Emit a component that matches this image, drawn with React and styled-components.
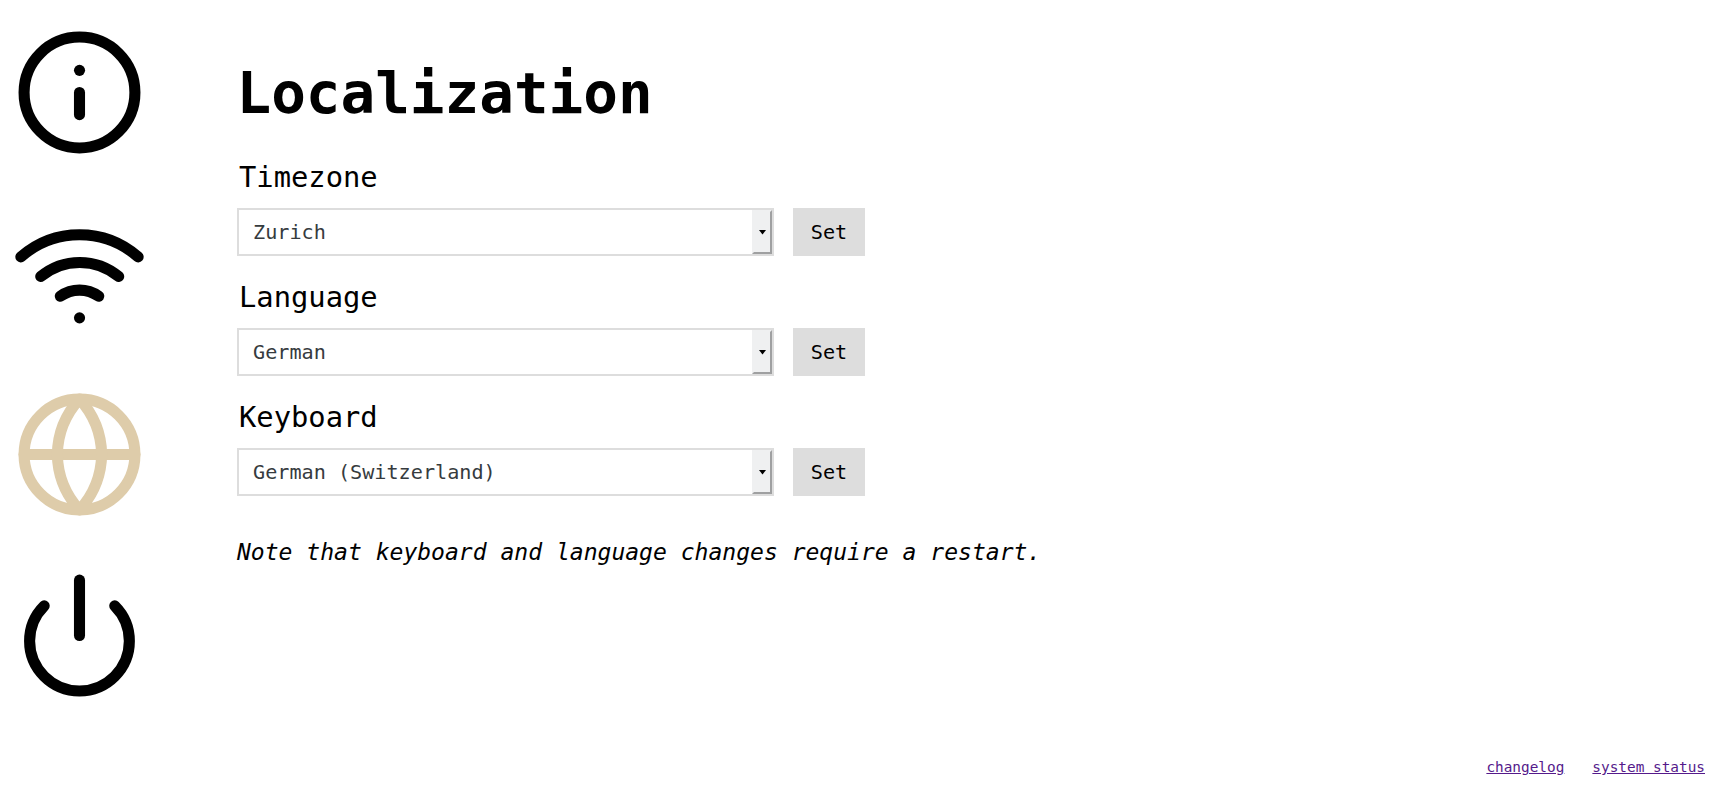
import React from "react";
import styled, { createGlobalStyle } from "styled-components";

const GlobalStyle = createGlobalStyle`
  * { box-sizing: border-box; }
  body {
    margin: 0;
    background: #fff;
    color: #000;
    font-family: "DejaVu Sans Mono", monospace;
  }
`;

const Page = styled.div`
  display: flex;
  flex-direction: column;
  height: 799px;
  overflow: hidden;
`;

const Body = styled.div`
  display: flex;
  flex: 1;
  min-height: 0;
`;

const Sidebar = styled.nav`
  display: flex;
  flex-direction: column;
  gap: 48px;
  width: 237px;
  padding: 26px 0 0 13px;
`;

const NavItem = styled.a`
  display: block;
  height: 133px;
  color: ${(p) => (p.$active ? "#deccaa" : "#000")};
`;

const Glyph = styled.svg`
  display: block;
  width: 133px;
  height: 133px;
  fill: none;
  stroke: currentColor;
  stroke-width: 2;
  stroke-linecap: round;
  stroke-linejoin: round;
`;

const Main = styled.main`
  flex: 1;
  padding-top: 60px;
`;

const Title = styled.h1`
  margin: 0 0 28px -0.5px;
  font-size: 57.6px;
  line-height: 68px;
  font-weight: bold;
`;

const Field = styled.div`
  height: 120px;
`;

const Label = styled.label`
  display: block;
  height: 52px;
  padding: 4px 0 0 2px;
  font-size: 28.8px;
  line-height: 34px;
`;

const Controls = styled.div`
  display: flex;
  gap: 19px;
`;

const Select = styled.div`
  display: flex;
  align-items: stretch;
  justify-content: space-between;
  width: 537px;
  height: 48px;
  border: 2px solid #ddd;
  background: #fff;
`;

const Value = styled.span`
  padding-left: 14px;
  font-size: 20.16px;
  line-height: 44px;
  color: #363b3e;
`;

const Arrow = styled.span`
  display: flex;
  align-items: center;
  justify-content: center;
  width: 20px;
  padding: 1px 0 0 1px;
  border: 2px solid;
  border-color: #eff0f1 #9fa0a1 #9fa0a1 #eff0f1;
  background: #eff0f1;
`;

const Button = styled.button`
  width: 72px;
  height: 48px;
  padding: 0;
  border: 0;
  background: #ddd;
  color: #000;
  font-family: inherit;
  font-size: 20.16px;
`;

const Note = styled.p`
  margin: 22px 0 0;
  font-size: 23.04px;
  line-height: 28px;
  font-style: italic;
`;

const Footer = styled.footer`
  display: flex;
  justify-content: flex-end;
  gap: 28px;
  height: 42px;
  padding: 2px 16px 0 0;
`;

const FooterLink = styled.a`
  color: #551a8b;
  font-size: 14.4px;
  line-height: 17px;
  text-decoration: underline;
`;

const icons = [
  {
    name: "info",
    shape: (
      <>
        <circle cx="12" cy="12" r="10" />
        <line x1="12" y1="16" x2="12" y2="12" />
        <line x1="12" y1="8" x2="12.01" y2="8" />
      </>
    ),
  },
  {
    name: "wifi",
    shape: (
      <>
        <path d="M5 12.55a11 11 0 0 1 14.08 0" />
        <path d="M1.42 9a16 16 0 0 1 21.16 0" />
        <path d="M8.53 16.11a6 6 0 0 1 6.95 0" />
        <line x1="12" y1="20" x2="12.01" y2="20" />
      </>
    ),
  },
  {
    name: "globe",
    active: true,
    shape: (
      <>
        <circle cx="12" cy="12" r="10" />
        <line x1="2" y1="12" x2="22" y2="12" />
        <path d="M12 2a15.3 15.3 0 0 1 4 10 15.3 15.3 0 0 1-4 10 15.3 15.3 0 0 1-4-10 15.3 15.3 0 0 1 4-10z" />
      </>
    ),
  },
  {
    name: "power",
    shape: (
      <>
        <path d="M18.36 6.64a9 9 0 1 1-12.73 0" />
        <line x1="12" y1="2" x2="12" y2="12" />
      </>
    ),
  },
];

const fields = [
  { label: "Timezone", value: "Zurich" },
  { label: "Language", value: "German" },
  { label: "Keyboard", value: "German (Switzerland)" },
];

export default function App() {
  return (
    <Page>
      <GlobalStyle />
      <Body>
        <Sidebar>
          {icons.map((icon) => (
            <NavItem key={icon.name} $active={icon.active}>
              <Glyph viewBox="0 0 24 24">{icon.shape}</Glyph>
            </NavItem>
          ))}
        </Sidebar>
        <Main>
          <Title>Localization</Title>
          {fields.map((field) => (
            <Field key={field.label}>
              <Label>{field.label}</Label>
              <Controls>
                <Select>
                  <Value>{field.value}</Value>
                  <Arrow>
                    <svg width="7" height="5" viewBox="0 0 7 5">
                      <path d="M0 0h7L3.5 4.6z" fill="#000" />
                    </svg>
                  </Arrow>
                </Select>
                <Button>Set</Button>
              </Controls>
            </Field>
          ))}
          <Note>Note that keyboard and language changes require a restart.</Note>
        </Main>
      </Body>
      <Footer>
        <FooterLink>changelog</FooterLink>
        <FooterLink>system status</FooterLink>
      </Footer>
    </Page>
  );
}
